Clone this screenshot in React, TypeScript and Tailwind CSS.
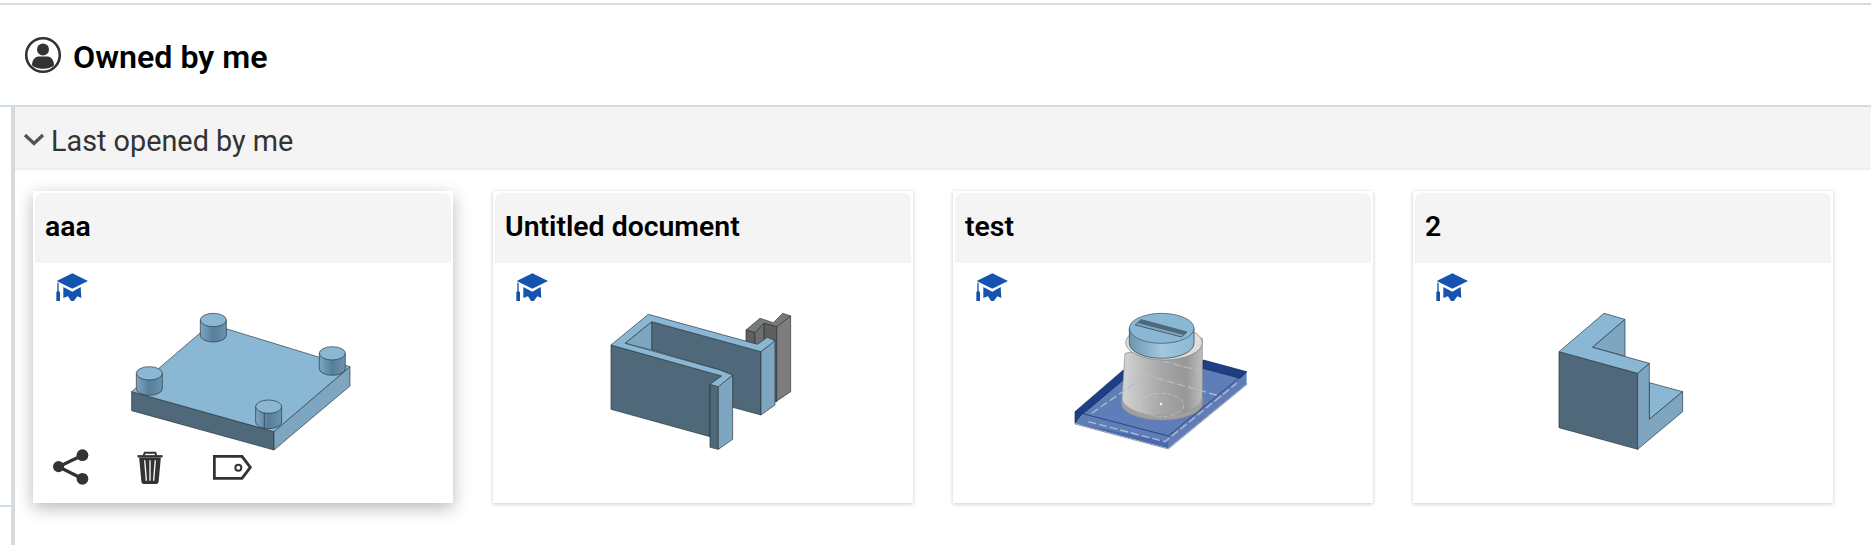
import React from "react";

const LIGHT = "#8ab8d4";
const MID = "#7fa6c1";
const DARK = "#50697a";
const EDGE = "#26343d";

function UserIcon() {
  return (
    <svg width="38" height="38" viewBox="0 0 38 38" className="shrink-0">
      <circle cx="19" cy="19" r="16.8" fill="none" stroke="#333" strokeWidth="2.6" />
      <circle cx="19" cy="13.5" r="6" fill="#333" />
      <path d="M8 29 C8 23 12 20.5 15 20.5 L23 20.5 C26 20.5 30 23 30 29 C26.5 34 11.5 34 8 29 Z" fill="#333" />
    </svg>
  );
}

function CapIcon() {
  return (
    <svg width="36" height="30" viewBox="40 20 108 90" className="absolute left-[21px] top-[8px]">
      <g fill="#1653b0">
        <path d="M95 27 L142 50 L95 73 L48 50 Z" />
        <path d="M68 68 L95 82 L120 68 L122 101 L110 96 L95 116 L82 96 L68 101 Z" />
        <path d="M50 55 L54 55 L54 80 L58 84 L58 110 L47 110 L47 84 L50 80 Z" />
      </g>
    </svg>
  );
}

function ShareIcon() {
  return (
    <svg width="36" height="36" viewBox="38 26 110 110">
      <path d="M128 45 L55 80 L128 117" fill="none" stroke="#333" strokeWidth="10" />
      <circle cx="128" cy="45" r="18" fill="#333" />
      <circle cx="55" cy="80" r="17" fill="#333" />
      <circle cx="128" cy="117" r="18" fill="#333" />
    </svg>
  );
}

function TrashIcon() {
  return (
    <svg width="26" height="33" viewBox="291 30 78 100">
      <path d="M292 46 L368 46" stroke="#333" strokeWidth="7" />
      <path d="M311 44 L314 35 L346 35 L349 44" fill="none" stroke="#333" strokeWidth="6" />
      <path d="M297 50 L363 50 L356 124 Q355 130 349 130 L311 130 Q305 130 304 124 Z" fill="#333" />
      <path d="M314 58 L319 120 M330 58 L330 120 M346 58 L341 120" stroke="#fff" strokeWidth="4" />
    </svg>
  );
}

function TagIcon() {
  return (
    <svg width="39" height="25" viewBox="518 43 117 75">
      <path d="M522 47 L605 47 L630 80 L605 113 L522 113 Z" fill="none" stroke="#333" strokeWidth="8.5" />
      <circle cx="594" cy="81" r="9" fill="none" stroke="#333" strokeWidth="6" />
    </svg>
  );
}

function Post({ cx, cy, notch }: { cx: number; cy: number; notch?: boolean }) {
  return (
    <g stroke={EDGE} strokeWidth="2">
      <path
        d={`M${cx - 39} ${cy} L${cx - 39} ${cy + 46} A39 20 0 0 0 ${cx + 39} ${cy + 46} L${cx + 39} ${cy} Z`}
        fill="url(#post)"
      />
      {notch && <path d={`M${cx - 13} ${cy + 18} L${cx - 13} ${cy + 66}`} />}
      <ellipse cx={cx} cy={cy} rx="39" ry="20" fill={LIGHT} />
    </g>
  );
}

function PlateThumb() {
  return (
    <svg width="420" height="240" viewBox="0 0 420 240" className="block">
      <defs>
        <linearGradient id="post" x1="0" x2="1" y1="0" y2="0">
          <stop offset="0" stopColor="#7fa6c1" />
          <stop offset="0.5" stopColor="#557f9c" />
          <stop offset="1" stopColor="#6d93ad" />
        </linearGradient>
      </defs>
      <g transform="translate(-13,-3) scale(0.3333)" stroke={EDGE} strokeWidth="2" strokeLinejoin="round">
        <path d="M335 395 L762 515 L762 570 L335 452 Z" fill={DARK} />
        <path d="M762 515 L990 320 L990 378 L762 570 Z" fill={MID} />
        <path d="M335 395 L572 192 L990 320 L762 515 Z" fill={LIGHT} />
        <Post cx={580} cy={180} />
        <Post cx={937} cy={280} />
        <Post cx={388} cy={340} />
        <Post cx={746} cy={440} notch />
      </g>
    </svg>
  );
}

function BracketThumb() {
  return (
    <svg width="420" height="240" viewBox="0 0 420 240" className="block">
      <g transform="translate(67,27) scale(0.3333)" stroke={EDGE} strokeWidth="2" strokeLinejoin="round">
        <path d="M648 335 L692 305 L692 78 L650 108 Z" fill="#7d7d7d" />
        <path d="M558 120 L600 85 L640 98 L668 70 L692 78 L650 110 L612 100 L585 128 Z" fill="#7a7a7a" />
        <path d="M558 120 L585 128 L585 170 L558 160 Z" fill="#5f5f5f" />
        <path d="M612 100 L650 110 L650 335 L612 335 Z" fill="#5f5f5f" />
        <path d="M585 128 L612 100 L612 150 L585 170 Z" fill="#6e6e6e" />
        <path d="M275 95 L603 185 L603 375 L518 352 L518 255 L480 240 L275 180 Z" fill={DARK} />
        <path d="M603 185 L645 150 L645 345 L603 375 Z" fill={MID} />
        <path d="M275 95 L275 180 L195 160 Z" fill={MID} />
        <path d="M153 165 L485 258 L450 283 L450 440 L153 358 Z" fill={DARK} />
        <path d="M450 283 L475 290 L475 478 L450 472 Z" fill={DARK} />
        <path d="M475 290 L518 255 L518 448 L475 478 Z" fill={MID} />
        <path d="M265 73 L592 163 L622 142 L645 152 L603 185 L275 95 L195 160 L480 240 L518 255 L475 290 L450 283 L485 258 L153 165 Z" fill={LIGHT} />
      </g>
    </svg>
  );
}

function CylinderThumb() {
  return (
    <svg width="420" height="240" viewBox="0 0 420 240" className="block">
      <defs>
        <linearGradient id="cyl" x1="0" x2="1" y1="0" y2="0">
          <stop offset="0" stopColor="#d4d4d4" />
          <stop offset="0.5" stopColor="#a6a6a6" />
          <stop offset="0.8" stopColor="#979797" />
          <stop offset="1" stopColor="#bdbdbd" />
        </linearGradient>
        <linearGradient id="cap" x1="0" x2="1" y1="0" y2="0">
          <stop offset="0" stopColor="#6d96b0" />
          <stop offset="0.5" stopColor="#a3c7dc" />
          <stop offset="1" stopColor="#8ab8d4" />
        </linearGradient>
      </defs>
      <g transform="translate(87,37) scale(0.3333)" strokeLinejoin="round">
        <path d="M105 370 L250 210 L490 180 L620 215 L620 252 L385 445 Z" fill="#5f7db8" />
        <path d="M105 335 L250 210 L256 235 L125 345 L105 370 Z" fill="#1e3f85" stroke="#14285a" strokeWidth="2" />
        <path d="M490 180 L620 215 L600 235 L488 205 Z" fill="#1e3f85" stroke="#14285a" strokeWidth="2" />
        <path d="M105 370 L385 425 L385 445 Z" fill="#4a6aae" />
        <path d="M105 335 L385 408 L620 215" fill="none" stroke="#14285a" strokeWidth="2" />
        <path d="M105 372 L385 447 L622 252" fill="none" stroke="#8e98a4" strokeWidth="3" />
        <path d="M255 160 L487 115 L487 310 A121 50 0 0 1 245 310 Z" fill="url(#cyl)" stroke="#8a8a8a" strokeWidth="2" />
        <path d="M245 290 A121 58 0 0 0 487 290 L487 310 A121 50 0 0 1 245 310 Z" fill="#a0a0a0" stroke="#8a8a8a" strokeWidth="1" />
        <ellipse cx="365" cy="315" rx="66" ry="35" fill="none" stroke="#c8c8c8" strokeWidth="2" strokeDasharray="14 6" />
        <circle cx="363" cy="312" r="3.5" fill="#fff" />
        <path d="M145 365 L375 425 L590 250 M155 340 L320 225 L545 290 M335 175 L490 215" fill="none" stroke="#b4bcc8" strokeWidth="4" strokeDasharray="24 9" />
        <ellipse cx="372" cy="128" rx="115" ry="52" fill="#dedede" stroke="#777" strokeWidth="2" />
        <path d="M268 85 L268 130 A97 45 0 0 0 462 130 L462 85 Z" fill="url(#cap)" stroke={EDGE} strokeWidth="2" />
        <ellipse cx="365" cy="85" rx="97" ry="45" fill={LIGHT} stroke="#3a4a55" strokeWidth="2" />
        <path d="M303 59 L441 96 L425 111 L286 75 Z" fill="#7fa6c1" stroke={EDGE} strokeWidth="2" />
        <path d="M303 59 L441 96 L431 105 L293 69 Z" fill={DARK} />
      </g>
    </svg>
  );
}

function StepThumb() {
  return (
    <svg width="420" height="240" viewBox="0 0 420 240" className="block">
      <g transform="translate(87,27) scale(0.3333)" stroke={EDGE} strokeWidth="2" strokeLinejoin="round">
        <path d="M177 185 L413 250 L413 478 L177 413 Z" fill={DARK} />
        <path d="M277 172 L375 88 L375 198 Z" fill={MID} />
        <path d="M448 278 L548 305 L448 388 Z" fill={LIGHT} />
        <path d="M413 250 L448 220 L448 388 L548 305 L548 365 L413 478 Z" fill={MID} />
        <path d="M177 185 L312 70 L375 88 L277 172 L448 220 L413 250 Z" fill={LIGHT} />
      </g>
    </svg>
  );
}

const docs = [
  { name: "aaa", thumb: <PlateThumb />, hovered: true },
  { name: "Untitled document", thumb: <BracketThumb />, hovered: false },
  { name: "test", thumb: <CylinderThumb />, hovered: false },
  { name: "2", thumb: <StepThumb />, hovered: false },
];

function DocCard({ name, thumb, hovered }: { name: string; thumb: React.ReactNode; hovered: boolean }) {
  return (
    <div
      className={`w-[420px] h-[312px] bg-white p-[2px] pb-0 ${
        hovered ? "shadow-[0_5px_16px_rgba(0,0,0,0.28)]" : "shadow-[0_1px_4px_rgba(0,0,0,0.22)]"
      }`}
    >
      <div className="h-[70px] bg-[#f4f4f4] rounded-t-[8px] flex items-center pl-[10px] pb-[2px] text-[28.4px] font-semibold text-black">
        {name}
      </div>
      <div className="relative -mx-[2px]">
        <CapIcon />
        {thumb}
        {hovered && (
          <div className="absolute left-[20px] bottom-[18px] flex items-center gap-[48px]">
            <ShareIcon />
            <TrashIcon />
            <div className="ml-[2px]">
              <TagIcon />
            </div>
          </div>
        )}
      </div>
    </div>
  );
}

export default function App() {
  return (
    <div className="h-[545px] overflow-hidden bg-white font-['Roboto',sans-serif]">
      <div className="mt-[3px] border-t-2 border-[#d0dce6]" />
      <div className="h-[102px] border-b-2 border-[#d0dce6] flex items-center pl-[24px] gap-[11px] text-[32.2px] font-semibold text-black">
        <UserIcon />
        <span className="pt-[5px]">Owned by me</span>
      </div>
      <div className="flex">
        <div className="w-[11px] h-[400px] shrink-0 border-b-2 border-[#d0dce6]" />
        <div className="w-[4px] h-[438px] shrink-0 bg-[#d0dce6] border-r border-[#d6d6d6]" />
        <div className="flex-1 min-w-0">
          <div className="h-[63px] bg-[#f4f4f4] border-b-2 border-[#eeeeee] flex items-center pl-[8px] gap-[6px] text-[28.8px] text-[#333]">
            <svg width="22" height="13" viewBox="0 0 22 13" className="mt-[4px]">
              <path d="M2 2 L11 10.5 L20 2" fill="none" stroke="#555" strokeWidth="3.4" />
            </svg>
            <span className="pt-[8px]">Last opened by me</span>
          </div>
          <div className="flex gap-[40px] pl-[18px] pt-[21px]">
            {docs.map((d) => (
              <DocCard key={d.name} {...d} />
            ))}
          </div>
        </div>
      </div>
    </div>
  );
}
